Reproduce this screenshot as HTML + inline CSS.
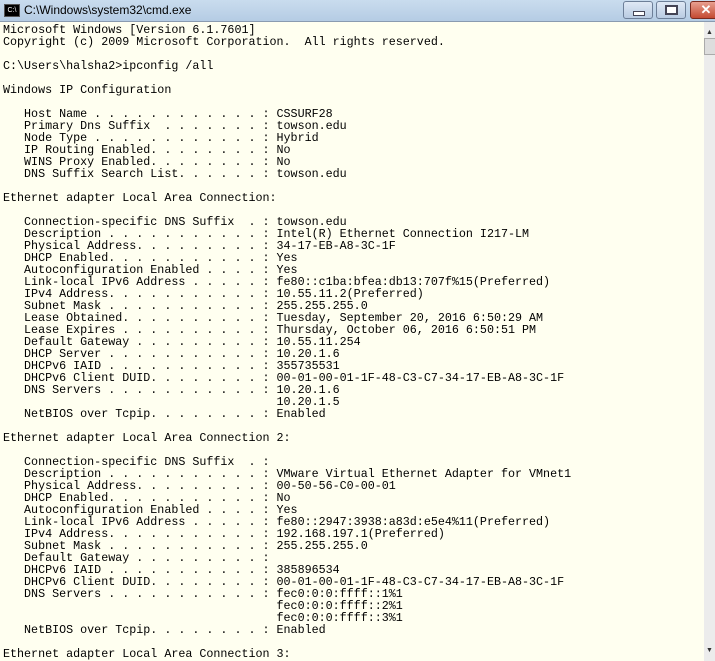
<!DOCTYPE html>
<html><head><style>
body{margin:0;width:715px;height:661px;overflow:hidden;background:#fffff0;position:relative;font-family:"Liberation Sans",sans-serif}
#tb{position:absolute;left:0;top:0;width:715px;height:21px;background:linear-gradient(#c9dcee,#b5cce4);border-bottom:1px solid #8a9bb0}
#tb .ic{position:absolute;left:4px;top:4px;width:14px;height:11px;background:#000;border:1px solid #555;color:#fff;font-size:7px;line-height:11px;text-align:center}
#tb .t{position:absolute;left:24px;top:3px;font-size:12px;color:#000}
.b{position:absolute;top:1px;height:16px;border:1px solid #6d7f98;border-radius:3px;background:linear-gradient(#dfe9f5,#b9cbe2)}
pre{position:absolute;left:3px;top:24px;margin:0;font-family:"Liberation Mono",monospace;font-size:11.7px;line-height:12px;color:#000}
#sb{position:absolute;left:704px;top:22px;width:11px;height:639px;background:#ececec}
</style></head><body>
<div id="tb"><div class="ic">C:\</div><div class="t">C:\Windows\system32\cmd.exe</div>
<div class="b" style="left:623px;width:28px"><div style="position:absolute;left:9px;top:9px;width:10px;height:3px;background:#fff;border:1px solid #445"></div></div>
<div class="b" style="left:656px;width:28px"><div style="position:absolute;left:8px;top:3px;width:9px;height:6px;border:2px solid #445;background:#fff"></div></div>
<div class="b" style="left:690px;width:30px;background:linear-gradient(#e8a090,#c44a32);border-color:#7a2a1e;color:#fff;font-weight:bold;font-size:13px;text-align:center;line-height:16px">✕</div>
</div>
<div id="sb"><div style="position:absolute;left:2px;top:7px;font-size:7px;color:#333">▲</div><div style="position:absolute;left:0;top:16px;width:10px;height:15px;background:#ddd;border:1px solid #aaa"></div><div style="position:absolute;left:2px;top:625px;font-size:7px;color:#333">▼</div></div>
<pre>Microsoft Windows [Version 6.1.7601]
Copyright (c) 2009 Microsoft Corporation.  All rights reserved.

C:\Users\halsha2>ipconfig /all

Windows IP Configuration

   Host Name . . . . . . . . . . . . : CSSURF28
   Primary Dns Suffix  . . . . . . . : towson.edu
   Node Type . . . . . . . . . . . . : Hybrid
   IP Routing Enabled. . . . . . . . : No
   WINS Proxy Enabled. . . . . . . . : No
   DNS Suffix Search List. . . . . . : towson.edu

Ethernet adapter Local Area Connection:

   Connection-specific DNS Suffix  . : towson.edu
   Description . . . . . . . . . . . : Intel(R) Ethernet Connection I217-LM
   Physical Address. . . . . . . . . : 34-17-EB-A8-3C-1F
   DHCP Enabled. . . . . . . . . . . : Yes
   Autoconfiguration Enabled . . . . : Yes
   Link-local IPv6 Address . . . . . : fe80::c1ba:bfea:db13:707f%15(Preferred)
   IPv4 Address. . . . . . . . . . . : 10.55.11.2(Preferred)
   Subnet Mask . . . . . . . . . . . : 255.255.255.0
   Lease Obtained. . . . . . . . . . : Tuesday, September 20, 2016 6:50:29 AM
   Lease Expires . . . . . . . . . . : Thursday, October 06, 2016 6:50:51 PM
   Default Gateway . . . . . . . . . : 10.55.11.254
   DHCP Server . . . . . . . . . . . : 10.20.1.6
   DHCPv6 IAID . . . . . . . . . . . : 355735531
   DHCPv6 Client DUID. . . . . . . . : 00-01-00-01-1F-48-C3-C7-34-17-EB-A8-3C-1F
   DNS Servers . . . . . . . . . . . : 10.20.1.6
                                       10.20.1.5
   NetBIOS over Tcpip. . . . . . . . : Enabled

Ethernet adapter Local Area Connection 2:

   Connection-specific DNS Suffix  . :
   Description . . . . . . . . . . . : VMware Virtual Ethernet Adapter for VMnet1
   Physical Address. . . . . . . . . : 00-50-56-C0-00-01
   DHCP Enabled. . . . . . . . . . . : No
   Autoconfiguration Enabled . . . . : Yes
   Link-local IPv6 Address . . . . . : fe80::2947:3938:a83d:e5e4%11(Preferred)
   IPv4 Address. . . . . . . . . . . : 192.168.197.1(Preferred)
   Subnet Mask . . . . . . . . . . . : 255.255.255.0
   Default Gateway . . . . . . . . . :
   DHCPv6 IAID . . . . . . . . . . . : 385896534
   DHCPv6 Client DUID. . . . . . . . : 00-01-00-01-1F-48-C3-C7-34-17-EB-A8-3C-1F
   DNS Servers . . . . . . . . . . . : fec0:0:0:ffff::1%1
                                       fec0:0:0:ffff::2%1
                                       fec0:0:0:ffff::3%1
   NetBIOS over Tcpip. . . . . . . . : Enabled

Ethernet adapter Local Area Connection 3:</pre>
</body></html>
